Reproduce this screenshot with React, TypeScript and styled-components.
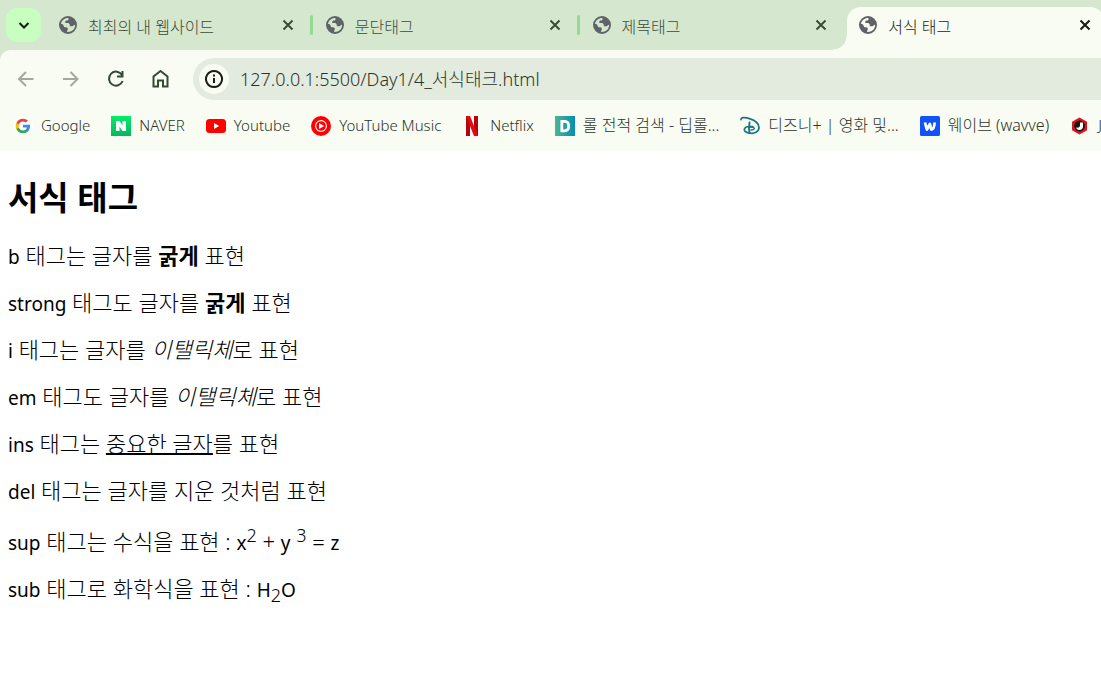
import React, { ReactNode } from "react";
import styled, { createGlobalStyle, css } from "styled-components";

const Global = createGlobalStyle`
  * { box-sizing: border-box; }
  body { margin: 0; background: #fff; color: #000; overflow-x: hidden;
    font-family: "Noto Sans", "Noto Sans CJK KR", sans-serif; }
  button { border: 0; padding: 0; background: none; font: inherit; color: inherit; display: grid; place-items: center; }
  svg { display: block; flex: none; }
`;

const Browser = styled.header`
  background: #d5e7cf;
  color: #3b4b38;
  font-weight: 300;
  overflow: hidden;
`;

const TabStrip = styled.div`
  display: flex;
  height: 50px;
`;

const TabSearch = styled.button`
  flex: none;
  width: 35px;
  height: 34px;
  margin: 8px 5px 0 6px;
  border-radius: 11px;
  background: #c8ffc0;
  color: #10200f;
`;

const Tabs = styled.nav`
  display: flex;
  flex: 1;
  min-width: 0;
  margin-right: -12px;
`;

const activeTab = css`
  flex-basis: 90px;
  margin: 7px 9px 0 1px;
  padding: 0 7px 7px 11px;
  border-radius: 14px 14px 0 0;
  background: #f8fcf3;
  color: #171d16;
  &::before {
    content: "";
    position: absolute;
    left: -14px;
    bottom: 0;
    width: 14px;
    height: 14px;
    background: radial-gradient(circle at 0 0, transparent 13px, #f8fcf3 14px);
  }
`;

const Tab = styled.div<{ $active?: boolean }>`
  position: relative;
  display: flex;
  align-items: center;
  gap: 10px;
  flex: 1 1 100px;
  min-width: 0;
  padding: 0 0 0 12px;
  ${(p) => p.$active && activeTab}
`;

const TabTitle = styled.a`
  flex: 1;
  min-width: 0;
  font-size: 16px;
  line-height: 20px;
  padding-top: 3px;
  color: inherit;
  text-decoration: none;
  white-space: nowrap;
  overflow: hidden;
`;

const TabClose = styled.button`
  width: 16px;
  height: 16px;
  margin-right: 4px;
`;

const Divider = styled.span<{ $hidden: boolean }>`
  width: 3px;
  height: 20px;
  border-radius: 2px;
  background: ${(p) => (p.$hidden ? "transparent" : "#97d992")};
`;

const Toolbar = styled.div`
  display: flex;
  align-items: center;
  padding: 8px 0 0 10px;
  background: #f8fcf3;
  border-top-left-radius: 10px;
`;

const NavButton = styled.button`
  flex: none;
  width: 32px;
  height: 32px;
  margin-right: 13px;
  color: #364a33;
  &:disabled { color: #a3a8a0; }
`;

const Omnibox = styled.div`
  display: flex;
  align-items: center;
  flex: 1;
  height: 42px;
  margin: 0 -30px 0 3px;
  padding-left: 6px;
  gap: 11px;
  border-radius: 21px;
  background: #e3ebdf;
`;

const SiteInfo = styled.button`
  width: 30px;
  height: 30px;
  border-radius: 50%;
  background: #f8fcf3;
  color: #171d16;
`;

const Address = styled.input`
  flex: 1;
  border: 0;
  padding: 0 0 2px;
  background: none;
  outline: none;
  color: #2c342a;
  font: inherit;
  font-size: 18px;
`;

const Bookmarks = styled.nav`
  display: flex;
  align-items: center;
  gap: 21px;
  height: 51px;
  padding-left: 13px;
  background: #f8fcf3;
`;

const Bookmark = styled.a<{ $korean?: boolean }>`
  display: flex;
  align-items: center;
  flex: none;
  gap: 8px;
  color: #2c342a;
  font-size: ${(p) => (p.$korean ? 16 : 15)}px;
  line-height: 20px;
  text-decoration: none;
  white-space: nowrap;
`;

const BookmarkLabel = styled.span`
  padding-bottom: 2px;
`;

const Page = styled.main`
  padding: 25px 8px;
  font-size: 22px;
  line-height: 27px;
`;

const Title = styled.h1`
  margin: 0 0 22px;
  font-size: 33px;
  line-height: 44px;
`;

const Line = styled.p`
  margin: 0 0 20px;
  font-weight: 300;
  b, strong { font-weight: 700; }
  ins { text-decoration-thickness: 2px; }
  sup, sub { font-size: 18px; line-height: 22px; }
`;

const Latin = styled.span`
  font-size: 19px;
  font-weight: 400;
  line-height: 19px;
`;

const Globe = () => (
  <svg width="20" height="20" viewBox="0 0 20 20" fill="#5f6368">
    <path
      fillRule="evenodd"
      d="M10 1a9 9 0 1 0 0 18 9 9 0 0 0 0-18zM2.9 8.8C3.6 5.3 6.4 2.9 10.3 2.9L10.6 4.6 9.6 5.6H8L7.3 6.6V8H10.4L11.8 9.4V11.2H14.6L17.1 9.6C17.4 14 14 17.1 9.6 17.1L8.9 16.2 9.8 14.6V13.2L8.6 12.2H6.4L4.8 9.2z"
    />
  </svg>
);

const Stroke = ({ d, size = 20, w = 2 }: { d: string; size?: number; w?: number }) => (
  <svg width={size} height={size} viewBox={`0 0 ${size} ${size}`} fill="none" stroke="currentColor" strokeWidth={w}>
    <path d={d} />
  </svg>
);

const marks: { label: string; korean?: boolean; icon: ReactNode }[] = [
  {
    label: "Google",
    icon: (
      <>
        <circle cx="10" cy="10" r="10" fill="#fff" />
        <g transform="translate(2 2) scale(.6667)">
          <path fill="#4285f4" d="M22.56 12.25c0-.78-.07-1.53-.2-2.25H12v4.26h5.92c-.26 1.37-1.04 2.53-2.21 3.31v2.77h3.57c2.08-1.92 3.28-4.74 3.28-8.09z" />
          <path fill="#34a853" d="M12 23c2.97 0 5.46-.98 7.28-2.66l-3.57-2.77c-.98.66-2.23 1.06-3.71 1.06-2.86 0-5.29-1.93-6.16-4.53H2.18v2.84C3.99 20.53 7.7 23 12 23z" />
          <path fill="#fbbc05" d="M5.84 14.09c-.22-.66-.35-1.36-.35-2.09s.13-1.43.35-2.09V7.07H2.18C1.43 8.55 1 10.22 1 12s.43 3.45 1.18 4.93l3.66-2.84z" />
          <path fill="#ea4335" d="M12 5.38c1.62 0 3.06.56 4.21 1.64l3.15-3.15C17.45 2.09 14.97 1 12 1 7.7 1 3.99 3.47 2.18 7.07l3.66 2.84c.87-2.6 3.3-4.53 6.16-4.53z" />
        </g>
      </>
    ),
  },
  {
    label: "NAVER",
    icon: (
      <>
        <defs>
          <linearGradient id="naver" x2="0" y2="1">
            <stop stopColor="#05ee68" />
            <stop offset="1" stopColor="#06b563" />
          </linearGradient>
        </defs>
        <path fill="url(#naver)" d="M0 0h20v20H0z" />
        <path fill="#fff" d="M5 5h3.6l2.9 4.400V5H15v10h-3.600l-2.900-4.400V15H5z" />
      </>
    ),
  },
  {
    label: "Youtube",
    icon: (
      <>
        <rect y="3" width="20" height="14" rx="3.5" fill="#f00" />
        <path fill="#fff" d="M8 7l5.200 3L8 13z" />
      </>
    ),
  },
  {
    label: "YouTube Music",
    icon: (
      <>
        <circle cx="10" cy="10" r="10" fill="#f00" />
        <circle cx="10" cy="10" r="5.4" fill="none" stroke="#fff" strokeWidth="1.1" />
        <path fill="#fff" d="M8 7l5.200 3L8 13z" />
      </>
    ),
  },
  {
    label: "Netflix",
    icon: (
      <>
        <path fill="#b1060f" d="M4 0h4v20l-4 .1zM12 0h4v20h-4z" />
        <path fill="#e50914" d="M4 0h4l8 20h-4z" />
      </>
    ),
  },
  {
    label: "롤 전적 검색 - 딥롤...",
    korean: true,
    icon: (
      <>
        <defs>
          <linearGradient id="deeplol">
            <stop stopColor="#4cb592" />
            <stop offset="1" stopColor="#078db0" />
          </linearGradient>
        </defs>
        <path fill="url(#deeplol)" d="M0 0h20v20H0z" />
        <path fill="none" stroke="#fff" strokeWidth="2.8" d="M6.8 5.4h2.9c2.6 0 4 1.8 4 4.7s-1.4 4.7-4 4.7H6.8z" />
      </>
    ),
  },
  {
    label: "디즈니+ | 영화 및...",
    korean: true,
    icon: (
      <g fill="none" stroke="#1f7285" strokeLinecap="round">
        <path strokeWidth="1.7" d="M1 3.6C.4 1.4 5 1.100 9.500 2.600c5.500 1.800 9.700 5 9.500 9.200-.2 4.200-4.800 6-9.200 5.400-3.600-.4-5.800-2-5.400-4 .4-2.200 4.400-3 8.400-2.500" />
        <path strokeWidth="1.9" d="M9.500 6.500c-.5 3-.5 7.500 0 10.500" />
        <path strokeWidth="1.3" d="M9 11.300c2.700-.4 6 0 5.300 1.500-.4.900-1.800 1.200-3.300 1.200" />
      </g>
    ),
  },
  {
    label: "웨이브 (wavve)",
    korean: true,
    icon: (
      <>
        <rect width="20" height="20" rx="1.5" fill="#1351f9" />
        <path fill="none" stroke="#fff" strokeWidth="2.8" strokeLinejoin="round" d="M5 6.500l1.900 7L9.900 8l1.300 5.500c2 0 3.200-3 3.400-7" />
      </>
    ),
  },
  {
    label: "J",
    icon: (
      <>
        <path fill="#e0101c" d="M9.500 1.500l7.500 4.200v8.600l-7.500 4.200L2 14.300V5.700z" />
        <circle cx="9.5" cy="10" r="5.4" fill="#15151a" />
        <path fill="#fff" d="M10 6.500h3v4c0 2.200-1.400 3.400-3.600 3.400-1.700 0-2.900-.9-3.200-2.300 2.400.5 3.800-.3 3.800-2z" />
      </>
    ),
  },
];

const tabs = ["최최의 내 웹사이드", "문단태그", "제목태그", "서식 태그"];

export default function App() {
  return (
    <>
      <Global />
      <Browser>
        <TabStrip>
          <TabSearch aria-label="Search tabs"><Stroke d="M5.5 8l4.500 4.500L14.500 8" /></TabSearch>
          <Tabs>
            {tabs.map((t, i) => (
              <Tab key={t} $active={i === 3}>
                <Globe />
                <TabTitle href="#">{t}</TabTitle>
                <TabClose aria-label="Close tab"><Stroke size={16} d="M3.5 3.500l9 9M12.500 3.500l-9 9" /></TabClose>
                {i < 3 && <Divider $hidden={i === 2} />}
              </Tab>
            ))}
          </Tabs>
        </TabStrip>
        <Toolbar>
          <NavButton disabled aria-label="Back"><Stroke d="M17.5 10H3M10 3l-7 7 7 7" /></NavButton>
          <NavButton disabled aria-label="Forward"><Stroke d="M2 10h14.500M9.500 3l7 7-7 7" /></NavButton>
          <NavButton aria-label="Reload"><Stroke d="M16 6a7 7 0 1 0 .6 6M16.500 2v5.500H11" /></NavButton>
          <NavButton aria-label="Home"><Stroke d="M2.5 17.500V7.500L9.500 2l7 5.500v10h-4.500v-6H7v6z" /></NavButton>
          <Omnibox>
            <SiteInfo aria-label="Site information"><Stroke d="M10 2a8 8 0 1 0 .01 0M10 9v5M10 5.500v2" /></SiteInfo>
            <Address aria-label="Address" defaultValue="127.0.0.1:5500/Day1/4_서식태크.html" />
          </Omnibox>
        </Toolbar>
        <Bookmarks>
          {marks.map((m) => (
            <Bookmark key={m.label} href="#" $korean={m.korean}>
              <svg width="20" height="20" viewBox="0 0 20 20">{m.icon}</svg>
              <BookmarkLabel>{m.label}</BookmarkLabel>
            </Bookmark>
          ))}
        </Bookmarks>
      </Browser>
      <Page>
        <Title>서식 태그</Title>
        <Line><Latin>b</Latin> 태그는 글자를 <b>굵게</b> 표현</Line>
        <Line><Latin>strong</Latin> 태그도 글자를 <strong>굵게</strong> 표현</Line>
        <Line><Latin>i</Latin> 태그는 글자를 <i>이탤릭체</i>로 표현</Line>
        <Line><Latin>em</Latin> 태그도 글자를 <em>이탤릭체</em>로 표현</Line>
        <Line><Latin>ins</Latin> 태그는 <ins>중요한 글자</ins>를 표현</Line>
        <Line><Latin>del</Latin> 태그는 글자를 지운 것처럼 표현</Line>
        <Line>
          <Latin>sup</Latin> 태그는 수식을 표현 : <Latin>x</Latin><sup>2</sup> + <Latin>y</Latin> <sup>3</sup> = <Latin>z</Latin>
        </Line>
        <Line>
          <Latin>sub</Latin> 태그로 화학식을 표현 : <Latin>H</Latin><sub>2</sub><Latin>O</Latin>
        </Line>
      </Page>
    </>
  );
}
